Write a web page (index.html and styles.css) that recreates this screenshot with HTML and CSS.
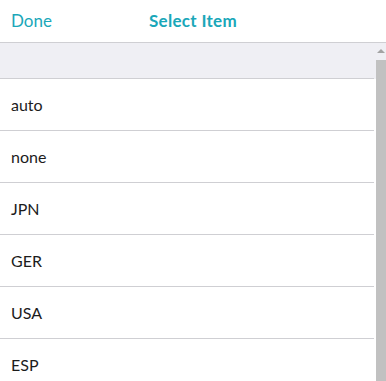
FILE: index.html
```html
<!DOCTYPE html>
<html lang="en">
<head>
    <meta charset="UTF-8">
    <meta name="viewport" content="width=device-width, initial-scale=1.0">
    <title>Select Item</title>
    <link rel="stylesheet" href="styles.css">
</head>
<body>
    <div class="picker">
        <header class="toolbar">
            <button class="btn-done">Done</button>
            <h1 class="title">Select Item</h1>
            <span class="spacer"></span>
        </header>

        <div class="list-wrap">
            <div class="list-header"></div>
            <ul class="options">
                <li>auto</li>
                <li>none</li>
                <li>JPN</li>
                <li>GER</li>
                <li>USA</li>
                <li>ESP</li>
            </ul>

            <div class="scrollbar">
                <span class="scroll-up"></span>
                <span class="scroll-thumb"></span>
            </div>
        </div>
    </div>
</body>
</html>
```

FILE: styles.css
```css
* {
    margin: 0;
    padding: 0;
    box-sizing: border-box;
}

html, body {
    height: 100%;
}

body {
    font-family: 'Lato', 'Open Sans', sans-serif;
    color: #1c1c1c;
    background: #fff;
    overflow: hidden;
}

.picker {
    height: 100%;
    display: flex;
    flex-direction: column;
}

.toolbar {
    height: 43px;
    flex-shrink: 0;
    display: grid;
    grid-template-columns: 1fr auto 1fr;
    align-items: center;
    padding: 0 11px 1px;
    border-bottom: 1px solid #cfcfd3;
}

.btn-done {
    justify-self: start;
    background: none;
    border: none;
    font-family: inherit;
    font-size: 17px;
    color: #1aa7b9;
    cursor: pointer;
}

.title {
    font-size: 17px;
    font-weight: 700;
    color: #1aa7b9;
    letter-spacing: 0.3px;
}

.list-wrap {
    flex: 1;
    position: relative;
    overflow: hidden;
}

.list-header {
    height: 36px;
    background: #efeff4;
    border-bottom: 1px solid #cfcfd3;
    margin-right: 12px;
    box-shadow: 12px 0 0 #efeff4;
}

.options {
    list-style: none;
    margin-right: 12px;
}

.options li {
    height: 52px;
    display: flex;
    align-items: center;
    padding-left: 11px;
    font-size: 16px;
    border-bottom: 1px solid #cfcfd3;
}

/* drawn scrollbar, sits over the right edge of the list */
.scrollbar {
    position: absolute;
    top: 0;
    right: 0;
    bottom: 0;
    width: 10px;
    display: flex;
    flex-direction: column;
}

.scroll-up {
    height: 17px;
    flex-shrink: 0;
    display: flex;
    justify-content: center;
    padding-top: 6px;
}

.scroll-up::before {
    content: "";
    border-left: 4px solid transparent;
    border-right: 4px solid transparent;
    border-bottom: 4px solid #a3a3a3;
    height: 0;
}

.scroll-thumb {
    flex: 1;
    background: #c1c1c1;
}
```
